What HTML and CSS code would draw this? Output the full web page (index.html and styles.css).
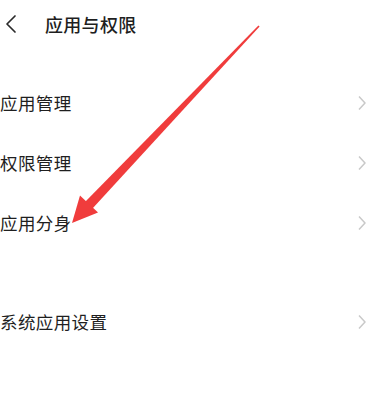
FILE: index.html
```html
<!DOCTYPE html>
<html lang="zh">
<head>
<meta charset="utf-8">
<title>应用与权限</title>
<link rel="stylesheet" href="styles.css">
</head>
<body>
<div class="page">
  <header class="header">
    <svg class="back" width="14" height="20" viewBox="0 0 14 20"><path d="M11 2 L3 10 L11 18" fill="none" stroke="#2a2a2a" stroke-width="1.7" stroke-linecap="round" stroke-linejoin="round"/></svg>
    <h1 class="title">应用与权限</h1>
  </header>
  <ul class="group first">
    <li class="row"><span class="label">应用管理</span><svg class="chev" width="10" height="16" viewBox="0 0 10 16"><path d="M2 1.5 L8 8 L2 14.5" fill="none" stroke="#c9c9c9" stroke-width="1.5" stroke-linejoin="round"/></svg></li>
    <li class="row"><span class="label">权限管理</span><svg class="chev" width="10" height="16" viewBox="0 0 10 16"><path d="M2 1.5 L8 8 L2 14.5" fill="none" stroke="#c9c9c9" stroke-width="1.5" stroke-linejoin="round"/></svg></li>
    <li class="row"><span class="label">应用分身</span><svg class="chev" width="10" height="16" viewBox="0 0 10 16"><path d="M2 1.5 L8 8 L2 14.5" fill="none" stroke="#c9c9c9" stroke-width="1.5" stroke-linejoin="round"/></svg></li>
  </ul>
  <ul class="group second">
    <li class="row"><span class="label">系统应用设置</span><svg class="chev" width="10" height="16" viewBox="0 0 10 16"><path d="M2 1.5 L8 8 L2 14.5" fill="none" stroke="#c9c9c9" stroke-width="1.5" stroke-linejoin="round"/></svg></li>
  </ul>
  <svg class="arrow" width="373" height="397" viewBox="0 0 373 397">
    <polygon points="92.5,208.4 259.6,26.4 258.4,25.6 85.5,201.6" fill="#f03c3c"/>
    <polygon points="72,223 80,195.5 98,212.5" fill="#f03c3c"/>
  </svg>
</div>
</body>
</html>
```
FILE: styles.css
```css
html, body {
  margin: 0;
  padding: 0;
  background: #ffffff;
}
.page {
  position: relative;
  width: 373px;
  height: 397px;
  overflow: hidden;
  font-family: "Noto Sans CJK SC", "Noto Sans", sans-serif;
  color: #1f1f1f;
}
.header {
  height: 48px;
  display: flex;
  align-items: center;
  padding-left: 4px;
}
.back {
  display: block;
}
.title {
  margin: 0 0 0 27px;
  font-size: 18px;
  font-weight: 500;
  line-height: 48px;
  letter-spacing: 0.3px;
}
.group {
  list-style: none;
  margin: 0;
  padding: 0;
}
.group.first {
  margin-top: 25px;
}
.group.second {
  margin-top: 39px;
}
.row {
  height: 60px;
  display: flex;
  align-items: center;
  justify-content: space-between;
  padding-right: 6px;
}
.label {
  font-size: 17.5px;
  line-height: 20px;
  letter-spacing: 0.4px;
}
.chev {
  display: block;
}
.arrow {
  position: absolute;
  left: 0;
  top: 0;
  pointer-events: none;
}
```
